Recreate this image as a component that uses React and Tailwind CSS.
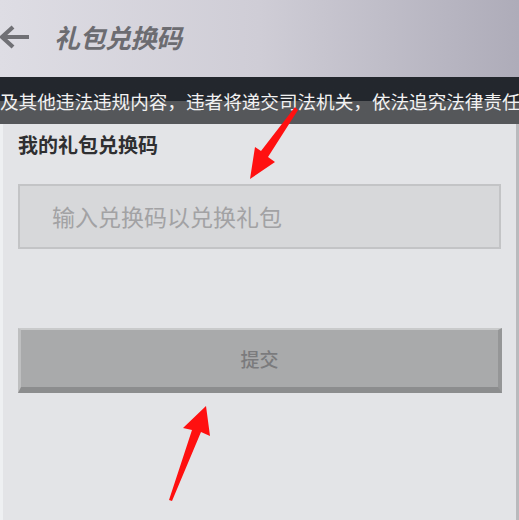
import React from "react";

const font = { fontFamily: '"Noto Sans CJK SC", "Noto Sans", sans-serif' };

export default function App() {
  return (
    <div className="relative w-[519px] h-[520px] overflow-hidden bg-[#e3e4e7]" style={font}>
      {/* header */}
      <div className="h-[77px] flex items-center bg-gradient-to-r from-[#dedde4] via-[#cfcdd6] to-[#aeacb9]">
        <svg width="34" height="26" viewBox="0 0 34 26" className="ml-[-2px] mt-[-4px]">
          <path d="M31 13 H5 M15 3 L4 13 L15 23" fill="none" stroke="#707075" strokeWidth="4.2" strokeLinecap="butt" strokeLinejoin="miter" />
        </svg>
        <div className="ml-[22px] mt-[-5px] text-[26px] font-bold italic text-[#6c6c71] tracking-[-0.5px]">礼包兑换码</div>
      </div>
      {/* banner */}
      <div className="h-[47px] overflow-hidden bg-gradient-to-b from-[#23272d] from-50% to-[#55575a] to-50% flex items-center">
        <div className="whitespace-nowrap text-[18.6px] leading-none text-[#f2f2f2] pt-[2px]">
          及其他违法违规内容，违者将递交司法机关，依法追究法律责任
        </div>
      </div>
      {/* body */}
      <div className="h-[396px] border-l-[3px] border-l-[#eef0f2] border-r-[3px] border-r-[#b9babd] pl-[15px] pr-[14px] pt-[10px]">
        <div className="text-[20px] font-bold text-[#2f2f31] leading-[24px] mt-[-1px]">我的礼包兑换码</div>
        <div className="mt-[27px] h-[65px] w-[483px] border-2 border-[#c3c4c6] bg-[#d7d8da] flex items-center pl-[32px]">
          <span className="text-[23px] text-[#a2a2a4]">输入兑换码以兑换礼包</span>
        </div>
        <div className="mt-[79px] h-[65px] w-[484px] bg-[#a9aaab] border-t-2 border-t-[#c9cacb] border-l-[3px] border-l-[#bebfc0] border-r-[4px] border-r-[#959697] border-b-[6px] border-b-[#8c8d8e] flex items-center justify-center">
          <span className="text-[19px] font-medium text-[#7b7b7d] mt-[2px]">提交</span>
        </div>
      </div>
      {/* red arrows */}
      <svg className="absolute left-0 top-0" width="519" height="520" viewBox="0 0 519 520">
        <polygon points="250,179 275,162 268,157 298,110 295,107 261,151 255,147" fill="#ff1010" />
        <polygon points="206,406 210,436 201,432 172,501 169,500 192,430 183,428" fill="#ff1010" />
      </svg>
    </div>
  );
}
